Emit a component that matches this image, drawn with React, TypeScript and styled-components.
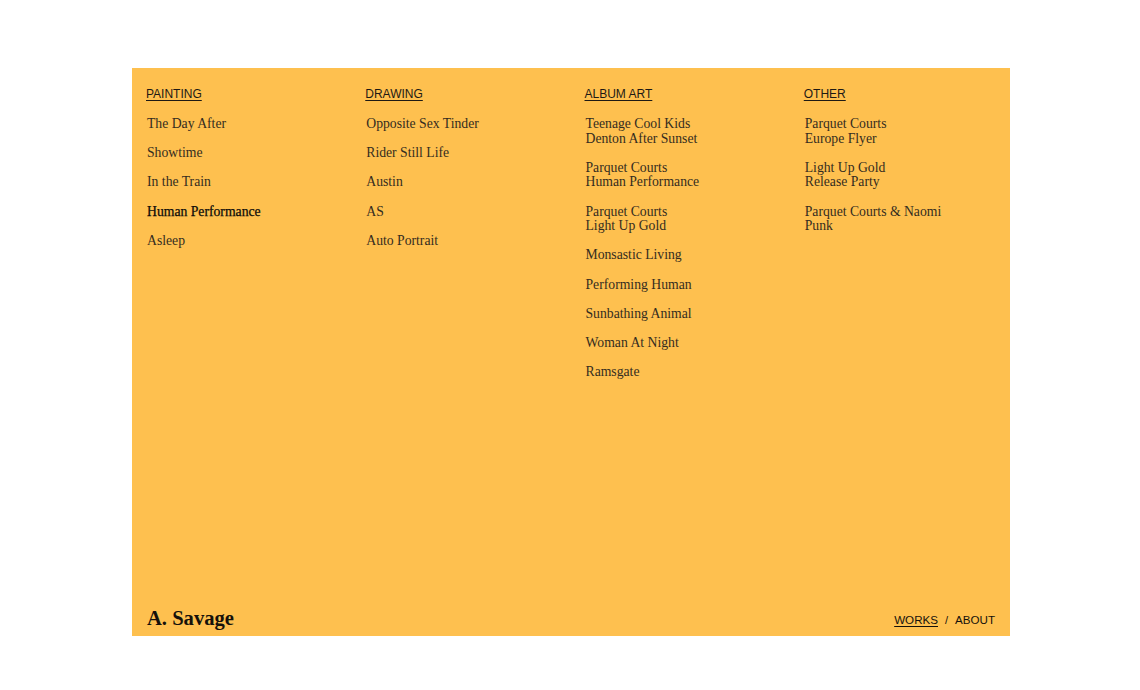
import React from "react";
import styled, { createGlobalStyle } from "styled-components";

const Global = createGlobalStyle`
  html, body { margin: 0; padding: 0; background: #ffffff; }
  body { font-family: "Liberation Serif", serif; }
`;

const Page = styled.div`
  width: 1140px;
  height: 690px;
  padding: 68px 0 0 132px;
  box-sizing: border-box;
`;

const Panel = styled.main`
  width: 878px;
  height: 568px;
  background: #fec04f;
  display: flex;
  flex-direction: column;
  justify-content: space-between;
  box-sizing: border-box;
  padding: 19px 15px 6px 14px;
`;

const Columns = styled.nav`
  display: grid;
  grid-template-columns: repeat(4, 1fr);
  column-gap: 28px;
  align-items: start;
`;

const Column = styled.section`
  display: flex;
  flex-direction: column;
`;

const Heading = styled.a`
  font-family: "Liberation Sans", Arial, sans-serif;
  font-size: 12px;
  line-height: 14.6px;
  color: #1e1a14;
  text-decoration: underline;
  text-underline-offset: 2px;
  text-decoration-thickness: 1px;
  margin-bottom: 15.4px;
  align-self: flex-start;
`;

const List = styled.ul`
  list-style: none;
  margin: 0;
  padding: 0 0 0 1px;
  display: flex;
  flex-direction: column;
  gap: 14.6px;
`;

const Item = styled.li<{ $active?: boolean }>`
  font-family: "Liberation Serif", serif;
  font-size: 13.7px;
  line-height: 14.6px;
  color: ${(p) => (p.$active ? "#0e0c09" : "#342c20")};
  ${(p) => (p.$active ? "-webkit-text-stroke: 0.25px #0e0c09;" : "")}
`;

const Footer = styled.footer`
  display: flex;
  justify-content: space-between;
  align-items: flex-end;
`;

const Logo = styled.h1`
  margin: 0 0 0 1px;
  font-family: "Liberation Serif", serif;
  font-weight: 700;
  font-size: 20.6px;
  line-height: 24px;
  color: #15110b;
`;

const FooterNav = styled.div`
  display: flex;
  align-items: center;
  gap: 7px;
  font-family: "Liberation Sans", Arial, sans-serif;
  font-size: 11.6px;
  line-height: 14px;
  color: #15110b;
  padding-bottom: 3px;
`;

const NavLink = styled.a<{ $current?: boolean }>`
  color: inherit;
  text-decoration: ${(p) => (p.$current ? "underline" : "none")};
  text-underline-offset: 2px;
`;

const Sep = styled.span`
  font-size: 11px;
`;

type Entry = { lines: string[]; active?: boolean };

const columns: { title: string; items: Entry[] }[] = [
  {
    title: "PAINTING",
    items: [
      { lines: ["The Day After"] },
      { lines: ["Showtime"] },
      { lines: ["In the Train"] },
      { lines: ["Human Performance"], active: true },
      { lines: ["Asleep"] },
    ],
  },
  {
    title: "DRAWING",
    items: [
      { lines: ["Opposite Sex Tinder"] },
      { lines: ["Rider Still Life"] },
      { lines: ["Austin"] },
      { lines: ["AS"] },
      { lines: ["Auto Portrait"] },
    ],
  },
  {
    title: "ALBUM ART",
    items: [
      { lines: ["Teenage Cool Kids", "Denton After Sunset"] },
      { lines: ["Parquet Courts", "Human Performance"] },
      { lines: ["Parquet Courts", "Light Up Gold"] },
      { lines: ["Monsastic Living"] },
      { lines: ["Performing Human"] },
      { lines: ["Sunbathing Animal"] },
      { lines: ["Woman At Night"] },
      { lines: ["Ramsgate"] },
    ],
  },
  {
    title: "OTHER",
    items: [
      { lines: ["Parquet Courts", "Europe Flyer"] },
      { lines: ["Light Up Gold", "Release Party"] },
      { lines: ["Parquet Courts & Naomi", "Punk"] },
    ],
  },
];

export default function App() {
  return (
    <Page>
      <Global />
      <Panel>
        <Columns>
          {columns.map((col) => (
            <Column key={col.title}>
              <Heading>{col.title}</Heading>
              <List>
                {col.items.map((it, i) => (
                  <Item key={i} $active={it.active}>
                    {it.lines.map((l, j) => (
                      <React.Fragment key={j}>
                        {j > 0 && <br />}
                        {l}
                      </React.Fragment>
                    ))}
                  </Item>
                ))}
              </List>
            </Column>
          ))}
        </Columns>
        <Footer>
          <Logo>A. Savage</Logo>
          <FooterNav>
            <NavLink $current>WORKS</NavLink>
            <Sep>/</Sep>
            <NavLink>ABOUT</NavLink>
          </FooterNav>
        </Footer>
      </Panel>
    </Page>
  );
}
